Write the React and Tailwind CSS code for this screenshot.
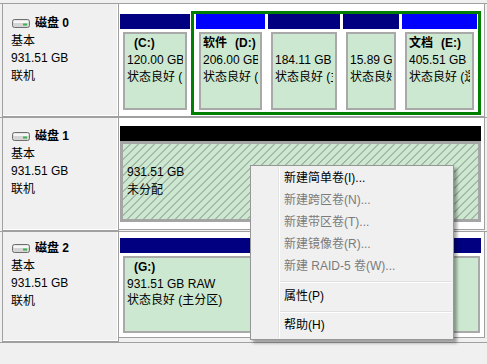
import React from "react";

const DiskIcon = () => (
  <svg width="18" height="9" viewBox="0 0 18 9" className="shrink-0">
    <rect x="0.5" y="0.5" width="17" height="8" rx="2" fill="#d4d4d4" stroke="#6e6e6e" />
    <rect x="1.5" y="1.5" width="15" height="2.5" rx="1" fill="#f6f6f6" />
    <rect x="11" y="4.5" width="4" height="2" fill="#3cb44b" />
  </svg>
);

const DiskLabel = ({ num, pad }) => (
  <div className={`ml-[2px] w-[117px] shrink-0 self-stretch border-x border-b border-[#a0a0a0] bg-[#f0f0f0] shadow-[inset_-1px_-1px_0_#ffffff] pl-[8px] leading-[17.5px] ${pad}`}>
    <div className="flex items-center">
      <span className="ml-[1px] mr-[5px] flex">
        <DiskIcon />
      </span>
      <span className="font-bold">磁盘 {num}</span>
    </div>
    <div>基本</div>
    <div>931.51 GB</div>
    <div>联机</div>
  </div>
);

const Volume = ({ w, bar, label, size, status }) => (
  <div className={`flex flex-col shrink-0 ${w}`}>
    <div className={`h-[15px] ${bar}`} />
    <div className="px-[3px] pt-[3px]">
      <div className="h-[78px] overflow-hidden whitespace-nowrap border-2 border-[#a9a9a9] bg-[#cde8d0] px-[2px] pt-[1px] leading-[17px]">
        <div className="h-[17px] overflow-hidden font-bold">{label}</div>
        <div className="overflow-hidden">{size}</div>
        <div className="overflow-hidden">{status}</div>
      </div>
    </div>
  </div>
);

const MenuItem = ({ children, disabled }) => (
  <div className="flex h-[22px] items-center">
    <div className="w-[28px] self-stretch border-r border-[#e2e3e3] shadow-[1px_0_0_#ffffff]" />
    <span className={`pl-[5px] ${disabled ? "text-[#7b7b7b]" : "text-black"}`}>{children}</span>
  </div>
);

const MenuSep = ({ h }) => (
  <div className={`flex ${h}`}>
    <div className="w-[28px] self-stretch border-r border-[#e2e3e3] shadow-[1px_0_0_#ffffff]" />
    <div className="flex-1 pl-[1px] pr-[1px] pt-[4px]">
      <div className="h-[2px] border-t border-[#e0e0e0] bg-white" />
    </div>
  </div>
);

export default function App() {
  return (
    <div className="relative h-[364px] w-[487px] overflow-hidden bg-[#f0f0f0] pt-[3px] text-[12px] text-black [font-family:'Liberation_Sans','Noto_Sans_CJK_SC',sans-serif]">
      {/* 磁盘 0 */}
      <div className="flex h-[114px] border-t border-[#a0a0a0]">
        <DiskLabel num="0" pad="pt-[11px]" />
        <div className="flex w-[366px] items-start self-stretch border-r border-b border-[#a0a0a0] bg-white pl-[1px] pt-[7px]">
          <div className="mt-[3px]">
            <Volume
              w="w-[70px]"
              bar="bg-[#000080]"
              label={<span className="pl-[7px]">(C:)</span>}
              size="120.00 GB"
              status="状态良好 (系统"
            />
          </div>
          <div className="ml-[1px] flex h-[104px] w-[290px] gap-[3px] border-[3px] border-[#008000] pl-[2px] pr-[1px]">
            <Volume
              w="w-[69px]"
              bar="bg-[#0000ff]"
              label={<span>软件<span className="ml-[8px]">(D:)</span></span>}
              size="206.00 GB"
              status="状态良好 (逻"
            />
            <Volume
              w="w-[72px]"
              bar="bg-[#000080]"
              label=""
              size="184.11 GB"
              status="状态良好 (主"
            />
            <Volume
              w="w-[56px]"
              bar="bg-[#000080]"
              label=""
              size="15.89 GB"
              status="状态良好"
            />
            <Volume
              w="w-[75px]"
              bar="bg-[#0000ff]"
              label={<span>文档<span className="ml-[8px]">(E:)</span></span>}
              size="405.51 GB"
              status="状态良好 (逻"
            />
          </div>
        </div>
      </div>

      {/* 磁盘 1 */}
      <div className="flex h-[114px] border-t border-[#a0a0a0]">
        <DiskLabel num="1" pad="pt-[10px]" />
        <div className="mb-[1px] flex w-[366px] flex-col border-r border-b border-[#a0a0a0] bg-white pl-[1px] pr-[3px] pt-[8px]">
          <div className="h-[15px] bg-black" />
          <div className="h-[81px] border-[3px] border-[#a5a5a5] bg-[repeating-linear-gradient(135deg,#cde8d0_0px,#cde8d0_4.7px,#a6b9a8_4.7px,#a6b9a8_5.66px)] pl-[4px] pt-[20px] leading-[17.5px]">
            <div>931.51 GB</div>
            <div>未分配</div>
          </div>
        </div>
      </div>

      {/* 磁盘 2 */}
      <div className="flex h-[112px] border-y border-[#a0a0a0]">
        <DiskLabel num="2" pad="pt-[8px]" />
        <div className="mb-[4px] flex w-[366px] flex-col border-r border-b border-[#a0a0a0] bg-white pl-[1px] pr-[3px] pt-[6px]">
          <div className="h-[15px] bg-[#000080]" />
          <div className="pl-[3px] pr-[1px] pt-[3px]">
            <div className="h-[77px] overflow-hidden whitespace-nowrap border-2 border-[#a9a9a9] bg-[#cde8d0] px-[2px] pt-[1px] leading-[16.5px]">
              <div className="pl-[7px] font-bold">(G:)</div>
              <div>931.51 GB RAW</div>
              <div>状态良好 (主分区)</div>
            </div>
          </div>
        </div>
      </div>

      {/* 右键菜单 */}
      <div className="absolute left-[250px] top-[165px] h-[175px] w-[204px] border border-[#979797] bg-[#f0f0f0] pt-[1px] shadow-[3px_3px_3px_rgba(0,0,0,0.35)]">
        <MenuItem>新建简单卷(I)...</MenuItem>
        <MenuItem disabled>新建跨区卷(N)...</MenuItem>
        <MenuItem disabled>新建带区卷(T)...</MenuItem>
        <MenuItem disabled>新建镜像卷(R)...</MenuItem>
        <MenuItem disabled>新建 RAID-5 卷(W)...</MenuItem>
        <MenuSep h="h-[8px]" />
        <MenuItem>属性(P)</MenuItem>
        <MenuSep h="h-[7px]" />
        <MenuItem>帮助(H)</MenuItem>
        <div className="flex h-[2px]">
          <div className="w-[28px] border-r border-[#e2e3e3] shadow-[1px_0_0_#ffffff]" />
        </div>
      </div>
    </div>
  );
}
